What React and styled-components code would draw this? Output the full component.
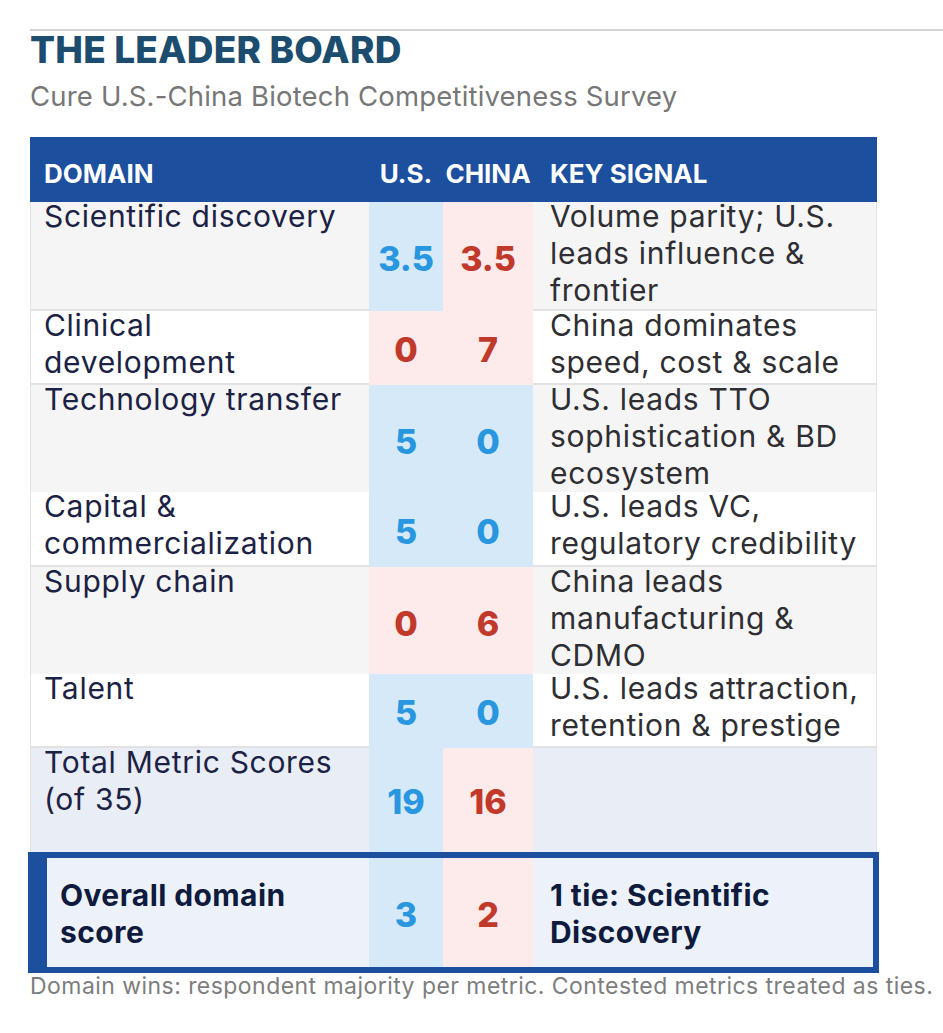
import React from "react";
import styled, { createGlobalStyle } from "styled-components";

const GlobalStyle = createGlobalStyle`
  body {
    margin: 0;
    background: #ffffff;
    font-family: "Inter", "Noto Sans", sans-serif;
  }
`;

const BLUE = "#1c4f9e";

const tones = {
  blue: { bg: "#d6e9f8", fg: "#2897df" },
  pink: { bg: "#fdeaea", fg: "#c0392b" },
};

const Page = styled.div`
  padding: 29px 0 0 30px;
`;

const Rule = styled.div`
  height: 2px;
  background: #d4d4d4;
`;

const Title = styled.h1`
  margin: 0;
  font-size: 37px;
  font-weight: 800;
  line-height: 38px;
  letter-spacing: 0.2px;
  color: #1c4d6e;
`;

const Subtitle = styled.p`
  margin: 10px 0 0;
  font-size: 27.5px;
  line-height: 34px;
  letter-spacing: 0.18px;
  color: #777777;
`;

const Table = styled.div`
  margin-top: 24px;
  width: 847px;
  display: flex;
  flex-direction: column;
`;

const HeadRow = styled.div`
  display: grid;
  grid-template-columns: 339px 74px 90px 344px;
  background: ${BLUE};
  color: #ffffff;
  padding: 22px 0 13px;
  font-size: 26px;
  font-weight: 700;
  line-height: 30px;
`;

const HeadCell = styled.div`
  padding-left: ${(p) => p.$pad || 0}px;
  text-align: ${(p) => (p.$center ? "center" : "left")};
  white-space: nowrap;
`;

const Row = styled.div`
  display: grid;
  grid-template-columns: 338px 74px 90px 343px;
  height: ${(p) => p.$h}px;
  border-left: 1px solid #e3e3e3;
  border-right: 1px solid #e3e3e3;
`;

const TextCell = styled.div`
  background: ${(p) => p.$bg};
  border-bottom: ${(p) => (p.$line ? "2px solid #e2e2e2" : "none")};
  padding: 0 8px 0 ${(p) => p.$pad}px;
  font-size: 30px;
  line-height: 37px;
  letter-spacing: 0.7px;
  color: ${(p) => p.$color};
  white-space: nowrap;
`;

const Lines = styled.div`
  margin-top: -4px;
`;

const ScoreCell = styled.div`
  display: flex;
  align-items: center;
  justify-content: center;
  padding-top: 3px;
  background: ${(p) => tones[p.$tone].bg};
  color: ${(p) => tones[p.$tone].fg};
  font-size: 34px;
  font-weight: 800;
`;

const Summary = styled.div`
  box-sizing: border-box;
  display: grid;
  grid-template-columns: 322px 74px 90px 340px;
  height: 121px;
  margin: 0 -2px;
  border: 6px solid ${BLUE};
  border-left-width: 19px;
`;

const SummaryText = styled.div`
  display: flex;
  flex-direction: column;
  justify-content: center;
  padding: 2px 0 0 ${(p) => p.$pad}px;
  background: #edf2fa;
  color: #0f1b3d;
  font-size: 30px;
  font-weight: 700;
  line-height: 37px;
  letter-spacing: 0.4px;
  white-space: nowrap;
`;

const Footnote = styled.p`
  margin: 0;
  font-size: 23px;
  line-height: 26px;
  letter-spacing: 0.45px;
  color: #7d7d7d;
  white-space: nowrap;
`;

const rows = [
  {
    h: 109,
    domain: ["Scientific discovery"],
    us: ["3.5", "blue"],
    cn: ["3.5", "pink"],
    signal: ["Volume parity; U.S.", "leads influence &", "frontier"],
  },
  {
    h: 74,
    domain: ["Clinical", "development"],
    us: ["0", "pink"],
    cn: ["7", "pink"],
    signal: ["China dominates", "speed, cost & scale"],
  },
  {
    h: 107,
    domain: ["Technology transfer"],
    us: ["5", "blue"],
    cn: ["0", "blue"],
    signal: ["U.S. leads TTO", "sophistication & BD", "ecosystem"],
  },
  {
    h: 75,
    domain: ["Capital &", "commercialization"],
    us: ["5", "blue"],
    cn: ["0", "blue"],
    signal: ["U.S. leads VC,", "regulatory credibility"],
  },
  {
    h: 107,
    domain: ["Supply chain"],
    us: ["0", "pink"],
    cn: ["6", "pink"],
    signal: ["China leads", "manufacturing &", "CDMO"],
  },
  {
    h: 74,
    domain: ["Talent"],
    us: ["5", "blue"],
    cn: ["0", "blue"],
    signal: ["U.S. leads attraction,", "retention & prestige"],
  },
];

const Multi = ({ lines }) =>
  lines.map((l, i) => <div key={i}>{l}</div>);

export default function App() {
  return (
    <>
      <GlobalStyle />
      <Page>
        <Rule />
        <Title>THE LEADER BOARD</Title>
        <Subtitle>Cure U.S.-China Biotech Competitiveness Survey</Subtitle>
        <Table>
          <HeadRow>
            <HeadCell $pad={14}>DOMAIN</HeadCell>
            <HeadCell $center>U.S.</HeadCell>
            <HeadCell $center>CHINA</HeadCell>
            <HeadCell $pad={17}>KEY SIGNAL</HeadCell>
          </HeadRow>
          {rows.map((r, i) => {
            const bg = i % 2 === 0 ? "#f5f5f5" : "#ffffff";
            return (
              <Row key={i} $h={r.h}>
                <TextCell $bg={bg} $line $pad={13} $color="#1b2244">
                  <Lines>
                    <Multi lines={r.domain} />
                  </Lines>
                </TextCell>
                <ScoreCell $tone={r.us[1]}>{r.us[0]}</ScoreCell>
                <ScoreCell $tone={r.cn[1]}>{r.cn[0]}</ScoreCell>
                <TextCell $bg={bg} $line $pad={17} $color="#2e2e33">
                  <Lines>
                    <Multi lines={r.signal} />
                  </Lines>
                </TextCell>
              </Row>
            );
          })}
          <Row $h={104}>
            <TextCell $bg="#e9edf5" $pad={13} $color="#1b2244">
              <Lines>
                <Multi lines={["Total Metric Scores", "(of 35)"]} />
              </Lines>
            </TextCell>
            <ScoreCell $tone="blue">19</ScoreCell>
            <ScoreCell $tone="pink">16</ScoreCell>
            <TextCell $bg="#e9edf5" $pad={17} $color="#1b2244" />
          </Row>
          <Summary>
            <SummaryText $pad={13}>
              <Multi lines={["Overall domain", "score"]} />
            </SummaryText>
            <ScoreCell $tone="blue">3</ScoreCell>
            <ScoreCell $tone="pink">2</ScoreCell>
            <SummaryText $pad={17}>
              <Multi lines={["1 tie: Scientific", "Discovery"]} />
            </SummaryText>
          </Summary>
        </Table>
        <Footnote>
          Domain wins: respondent majority per metric. Contested metrics
          treated as ties.
        </Footnote>
      </Page>
    </>
  );
}
